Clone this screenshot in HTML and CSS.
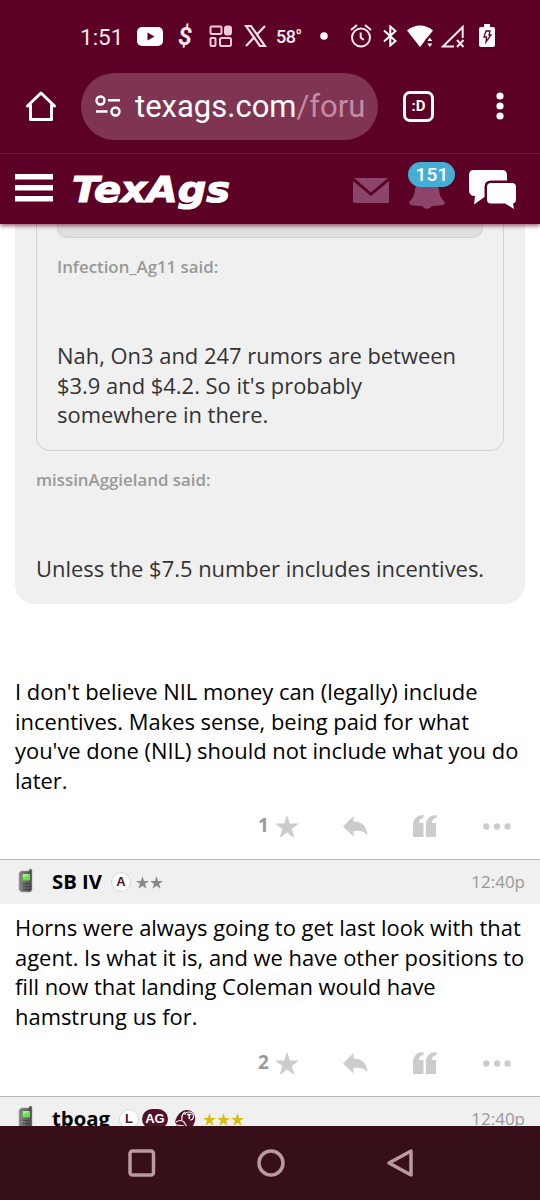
FILE: index.html
```
<!DOCTYPE html>
<html lang="en">
<head>
<meta charset="utf-8">
<meta name="viewport" content="width=device-width">
<title>TexAgs</title>
<link rel="stylesheet" href="styles.css">
</head>
<body>
<svg class="defs" width="0" height="0">
  <defs>
    <linearGradient id="phone-body" x1="0" x2="1" y1="0" y2="0"><stop offset="0" stop-color="#888"/><stop offset=".5" stop-color="#696969"/><stop offset="1" stop-color="#484848"/></linearGradient>
    <symbol id="phone" viewBox="0 0 16 26"><path d="M11 2.500Q11 1 12 1h1Q14 1 14 2.500V22l-1.500 2H3.500L1 22V5L3 3h8z" fill="url(#phone-body)" stroke="#aaa" stroke-width=".6"/><rect x="4.500" y="6" width="7.500" height="6.500" rx="1" fill="#6be04d"/><path d="M5 6h7L5 10z" fill="#a1f389"/><path d="M5 15.500h7M5 18.500h7M5 21.500h7M8.500 15v7" stroke="#444" stroke-width=".8"/></symbol>
    <symbol id="star" viewBox="0 0 24 23"><path d="M12 0l2.900 8.600H24l-7.300 5.400 2.800 9-7.500-5.500L4.500 23l2.800-9L0 8.600h9.100z"/></symbol>
    <symbol id="reply" viewBox="0 0 25 21"><path d="M0 10.500 10.500 0v5.500C20 5.500 24 11.500 24.500 19.500 21 15 17 14.500 10.500 15v5.500z"/></symbol>
    <symbol id="quote" viewBox="0 0 24 22"><path d="M10.500 0v3C7.500 3.500 6 5 6 8h4.500v14H0V10C0 4.500 3.500 0 10.500 0zM23.500 0v3C20.500 3.500 19 5 19 8h4v14H12.800V10c0-5.500 3.700-10 10.700-10z"/></symbol>
    <symbol id="more" viewBox="0 0 28 7"><circle cx="3.300" cy="3.500" r="3.200"/><circle cx="14" cy="3.500" r="3.200"/><circle cx="24.600" cy="3.500" r="3.200"/></symbol>
  </defs>
</svg>
<div class="screen">
  <div class="status">
    <span class="clock">1:51</span>
    <svg class="youtube" viewBox="0 0 26 19" width="26" height="19"><rect width="26" height="19" rx="5" fill="#fff"/><path d="M10.500 5.500v8l7-4z" fill="#5c0025"/></svg>
    <span class="dollar">$</span>
    <svg class="tiles" viewBox="0 0 23 23" width="23" height="23" fill="none" stroke="#f0cbd9" stroke-width="2"><rect x="1.500" y="1.500" width="11" height="7.500" rx="1.500"/><rect x="16" y="1.500" width="6" height="8" rx="2" fill="#f0cbd9"/><rect x="1.500" y="13" width="5" height="8" rx="1"/><rect x="11" y="13" width="11" height="8" rx="1.500"/></svg>
    <svg class="x-logo" viewBox="0 0 23 22" width="23" height="22" fill="none" stroke="#f7dfe8" stroke-width="2.200"><path d="M2 1h5l14 20h-5zM21 1l-8.500 9M10.500 12 2 21"/></svg>
    <span class="temp">58°</span>
    <svg class="dot" viewBox="0 0 8 8" width="8" height="8"><circle cx="4" cy="4" r="3.800" fill="#fff"/></svg>
    <svg class="alarm" viewBox="0 0 22 24" width="22" height="24" fill="none" stroke="#ffe9f0" stroke-width="2"><circle cx="11" cy="13.500" r="9"/><path d="M1 6 7 1M21 6l-6-5M10.700 8.500v5l3 2.500"/></svg>
    <svg class="bluetooth" viewBox="0 0 15 22" width="15" height="22" fill="none" stroke="#fff" stroke-width="2"><path d="m1 5.500 11.500 10.500L7.300 20.500V1.500L12.500 6 1 16.500"/></svg>
    <svg class="wifi" viewBox="0 0 26 23" width="26" height="23" fill="#fff"><path d="M0 5.500Q13-4.500 26 5.500L13 22z"/><path d="m18 15 5-5 5 5v8H16z" fill="#5c0025"/><path d="m20.300 16 2.500-3.500 2.500 3.500zM20.300 18.500h5L22.800 22z"/></svg>
    <svg class="signal" viewBox="0 0 24 23" width="24" height="23" fill="none" stroke="#ffe9f0" stroke-width="2"><path d="M13 21.500H2L21.700 2v11M16 15l6.500 7m0-7L16 22"/></svg>
    <svg class="battery" viewBox="0 0 16 24" width="16" height="24"><path d="M5 0h6v3h3q2 0 2 2v16q0 2-2 2H2q-2 0-2-2V5q0-2 2-2h3z" fill="#fff"/><path d="M7 7h4l-1 4h2l-5 7 .5-5H5z" fill="none" stroke="#5c0025" stroke-width="1.300"/></svg>
  </div>

  <div class="browser">
    <svg class="home" viewBox="0 0 32 32" width="32" height="32" fill="none" stroke="#fff" stroke-width="3" stroke-linejoin="round" stroke-linecap="round"><path d="M2.500 16 16 3l13.500 13M5.500 15v14.500h21V15"/></svg>
    <div class="address">
      <svg viewBox="0 0 26 22" width="26" height="22" fill="none" stroke="#fff" stroke-width="2.400"><circle cx="5.500" cy="5.500" r="4"/><circle cx="20.500" cy="16.500" r="4"/><path d="M13 5.300h12M1 16.500h11.500"/></svg>
      <span class="url">texags.com<span>/foru</span></span>
    </div>
    <div class="tabs">:D</div>
    <svg class="kebab" viewBox="0 0 8 28" width="8" height="28" fill="#fff"><circle cx="4" cy="4" r="3.600"/><circle cx="4" cy="14" r="3.600"/><circle cx="4" cy="24" r="3.600"/></svg>
  </div>

  <header class="site">
    <svg class="menu" viewBox="0 0 38 28" width="38" height="28" fill="#fff"><path d="M0 0h38v5.500H0zM0 11h38v5.500H0zM0 22h38v5.500H0z"/></svg>
    <svg class="logo" viewBox="0 0 160 42" width="160" height="42"><text x="-1" y="34" textLength="158" lengthAdjust="spacingAndGlyphs">TexAgs</text></svg>
    <svg class="mail" viewBox="0 0 36 25" width="36" height="25" fill="#8b456b"><path d="M1 0h34L18 14.500zM0 3l18 15L36 3v20.500q0 1.500-1.500 1.500h-33Q0 25 0 23.500z"/></svg>
    <div class="alerts">
      <svg viewBox="0 0 36 31" width="36" height="31" fill="#8b456b"><path d="M18 0c9 0 11 5 12 12 .8 6 2 8 5 11 2 3 0 4-4 4.500l-8 .500q-2 3-5 3t-5-3l-8-.500c-4-.500-6-1.500-4-4.500 3-3 4-5 5-11C7 5 9 0 18 0z"/></svg>
      <span class="count">151</span>
    </div>
    <svg class="chat" viewBox="0 0 48 40" width="48" height="40" fill="#fff"><path d="M5 0h28q5 0 5 5v5.500H22q-6.500 0-6.500 6.500v10L5 34.500 6 26Q0 26 0 20V5q0-5 5-5z"/><path d="M22 13h21q4 0 4 4v12q0 4-3 4.500l1 5.500-9-5.500H22q-4 0-4-4V17q0-4 4-4z"/></svg>
  </header>

  <main class="thread">
    <blockquote class="quote">
      <div class="inner">
        <div class="deep"></div>
        <p class="said">Infection_Ag11 said:</p>
        <p class="text">Nah, On3 and 247 rumors are between<br>$3.9 and $4.2. So it's probably<br>somewhere in there.</p>
      </div>
      <p class="said">missinAggieland said:</p>
      <p class="text">Unless the $7.5 number includes incentives.</p>
    </blockquote>
    <p class="message first">I don't believe NIL money can (legally) include<br>incentives. Makes sense, being paid for what<br>you've done (NIL) should not include what you do<br>later.</p>
    <div class="actions"><b>1</b><svg class="a-star"><use href="#star"/></svg><svg class="a-reply"><use href="#reply"/></svg><svg class="a-quote"><use href="#quote"/></svg><svg class="a-more"><use href="#more"/></svg></div>

    <div class="post-head">
      <svg class="device"><use href="#phone"/></svg><b class="user">SB IV</b><span class="badge">A</span>
      <span class="rank gray"><svg><use href="#star"/></svg><svg><use href="#star"/></svg></span><time>12:40p</time>
    </div>
    <p class="message second">Horns were always going to get last look with that<br>agent. Is what it is, and we have other positions to<br>fill now that landing Coleman would have<br>hamstrung us for.</p>
    <div class="actions"><b>2</b><svg class="a-star"><use href="#star"/></svg><svg class="a-reply"><use href="#reply"/></svg><svg class="a-quote"><use href="#quote"/></svg><svg class="a-more"><use href="#more"/></svg></div>
    <div class="post-head last">
      <svg class="device"><use href="#phone"/></svg><b class="user">tboag</b><span class="badge">L</span><span class="badge ag">AG</span>
      <svg class="helmet" viewBox="0 0 22 20" width="22" height="20"><path d="M1 13C3 5 8 1 13 1c6 0 9 5 8 11l-2 5-5 3H6l-5-1 2-3z" fill="#541027"/><path d="M2 13q5-3 8 0l3 5M3 16l7 1M8 11q-1-5 3-8" fill="none" stroke="#fff" stroke-width="1.100"/><path d="M11 6q0-3 4-3 4.500 0 4.500 4T16 11" fill="none" stroke="#fff" stroke-width="1.200"/><path d="M13 5.500h4.500M15.200 5.500V10" stroke="#fff" stroke-width="1.500"/></svg>
      <span class="rank gold"><svg><use href="#star"/></svg><svg><use href="#star"/></svg><svg><use href="#star"/></svg></span><time>12:40p</time>
    </div>
  </main>

  <nav class="system">
    <svg viewBox="0 0 28 28" width="28" height="28"><rect x="2" y="2" width="23.500" height="24" rx="2.500"/></svg>
    <svg viewBox="0 0 28 28" width="28" height="28"><circle cx="14" cy="14" r="12"/></svg>
    <svg viewBox="0 0 28 28" width="28" height="28"><path d="M25 2v24L3 14z"/></svg>
  </nav>
</div>
</body>
</html>
```
FILE: styles.css
```
* { box-sizing: border-box; }
body { margin: 0; background: #fff; }
p, blockquote { margin: 0; }
svg { display: block; flex: none; }
.defs { position: absolute; }
.screen { display: flex; flex-direction: column; width: 540px; height: 1200px; overflow: hidden; font-family: "Open Sans", "Noto Sans", sans-serif; }

.status { flex: none; display: flex; align-items: center; height: 72px; padding-left: 80px; background: #5c0025; color: #ffe9f0; font-family: Roboto, sans-serif; white-space: nowrap; }
.clock { width: 57px; padding-top: 2px; font-size: 22.500px; letter-spacing: 0; }
.dollar { width: 15px; margin-left: 15px; font-size: 25px; font-weight: 700; font-style: italic; }
.tiles { margin-left: 16px; }
.x-logo { margin-left: 12px; }
.temp { width: 26px; margin-left: 9px; font-size: 18px; font-weight: 500; letter-spacing: -.6px; }
.dot { margin-left: 18px; }
.alarm { margin-left: 22px; }
.bluetooth { margin-left: 11px; }
.wifi { margin-left: 9px; }
.signal { margin-left: 8px; }
.battery { margin-left: 14px; }

.browser { flex: none; display: flex; align-items: center; height: 82px; padding: 0 0 13px 25px; background: #5c0025; border-bottom: 1px solid #741b40; }
.address { display: flex; align-items: center; flex: none; width: 297px; height: 67px; margin-left: 24px; padding-left: 14px; border-radius: 34px; background: #7f3552; }
.url { margin-left: 14px; padding-top: 1px; color: #fff; font: 31px/40px Roboto, sans-serif; white-space: nowrap; }
.url span { color: #c58ba5; }
.tabs { flex: none; width: 31px; height: 31px; margin-left: 25px; border: 3px solid #fff; border-radius: 7px; color: #fff; font: 700 15px/25px Roboto, sans-serif; text-align: center; }
.kebab { margin-left: 62px; }

.site { position: relative; z-index: 1; flex: none; display: flex; height: 70px; background: #5c0025; box-shadow: 0 2px 4px #5c002599; }
.menu { margin: 20px 0 0 15px; }
.logo { margin: 14px 0 0 20px; overflow: visible; }
.logo text { font: italic 700 36px "DejaVu Sans", sans-serif; fill: #fff; stroke: #fff; stroke-width: 1.200; }
.mail { margin: 24px 0 0 120px; }
.alerts { position: relative; width: 36px; margin: 24px 0 0 20px; }
.count { position: absolute; left: -1px; top: -16px; width: 47px; height: 25px; border-radius: 13px; background: #45aed4; color: #fff; font: 500 19px/25px Roboto, sans-serif; letter-spacing: .2px; padding-left: 1px; text-align: center; }
.chat { margin: 16px 0 0 24px; }

.thread { flex: 1; min-height: 0; overflow: hidden; color: #000; font-size: 21.930px; line-height: 29.600px; white-space: nowrap; }
.quote { height: 380px; margin: 0 15px; padding: 0 21px; border-radius: 0 0 20px 20px; background: #f0f0f0; color: #333; }
.inner { height: 227px; padding: 0 20px; border: 1px solid #d2d2d2; border-top: 0; border-radius: 0 0 14px 14px; }
.deep { height: 14px; border: 1px solid #d2d2d2; border-top: 0; border-radius: 0 0 10px 10px; background: #e0e0e0; }
.said { color: #999; font-size: 16.850px; font-weight: 600; line-height: 24px; }
.inner .said { padding-top: 17px; }
.inner .text { padding-top: 62px; }
.quote > .said { padding-top: 17px; }
.quote > .text { padding-top: 62px; }
.message { padding-left: 15px; }
.first { padding-top: 73px; height: 192px; }
.actions { display: flex; align-items: center; height: 63px; padding: 0 0 3px 258px; color: #999; fill: #ccc; font-size: 19px; }
.actions b { width: 17px; }
.a-star { width: 24px; height: 23px; }
.a-reply { width: 25px; height: 21px; margin-left: 44px; }
.a-quote { width: 24px; height: 22px; margin-left: 45px; }
.a-more { width: 28px; height: 7px; margin-left: 46px; }
.post-head { display: flex; align-items: center; height: 45px; padding: 0 15px 0 18px; border-top: 1px solid #b9b9b9; background: #f0f0f0; }
.device { width: 16px; height: 26px; margin-top: -3px; }
.user { margin-left: 18px; font-size: 20.300px; }
.badge { display: flex; align-items: center; justify-content: center; width: 20px; height: 20px; margin-left: 9px; border: 1px solid #ccdcdc; border-radius: 10px; background: #fff; color: #541027; font: 700 13px/18px "Liberation Sans", sans-serif; }
.badge.ag { width: 26px; margin-left: 3px; border: 0; background: #541027; color: #fff; }
.helmet { margin-left: 6px; }
.rank { display: flex; gap: 1px; margin-left: 5px; }
.rank svg { width: 13px; height: 13px; }
.gray { fill: #888; }
.gold { margin-left: 7px; fill: #d7bd13; }
.post-head time { margin-left: auto; color: #999; font-size: 17px; }
.second { height: 129px; padding-top: 9px; }

.system { flex: none; display: flex; gap: 101px; height: 74px; padding: 23px 0 0 128px; background: #370f18; fill: none; stroke: #b69ba0; stroke-width: 3.500; stroke-linejoin: round; }
```
